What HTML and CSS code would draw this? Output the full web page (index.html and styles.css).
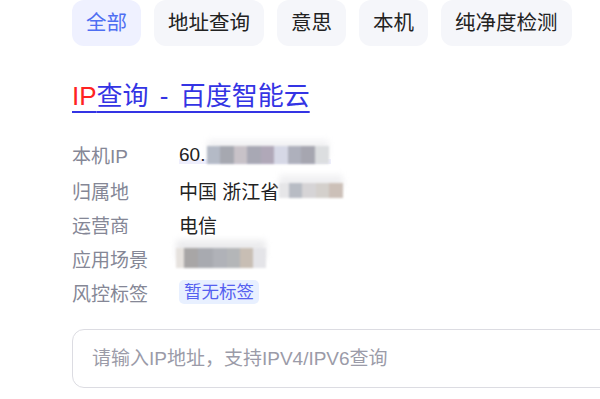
FILE: index.html
```html
<!DOCTYPE html>
<html lang="zh-CN">
<head>
  <meta charset="UTF-8">
  <title>IP查询 - 百度智能云</title>
  <meta name="viewport" content="width=device-width, initial-scale=1.0">
  <link rel="stylesheet" href="styles.css">
</head>
<body>

  <!-- 顶部分类 -->
  <div class="tabs">
    <span class="tab active">全部</span>
    <span class="tab">地址查询</span>
    <span class="tab">意思</span>
    <span class="tab">本机</span>
    <span class="tab">纯净度检测</span>
  </div>

  <!-- 标题 -->
  <h3 class="title"><a href="#"><em>IP</em>查询 - 百度智能云</a></h3>

  <!-- 结果 -->
  <div class="info">
    <div class="row first">
      <span class="label">本机IP</span>
      <span class="value ip">60.<i class="mosaic m-ip"></i></span>
    </div>
    <div class="row">
      <span class="label">归属地</span>
      <span class="value">中国 浙江省<i class="mosaic m-loc"></i></span>
    </div>
    <div class="row">
      <span class="label">运营商</span>
      <span class="value">电信</span>
    </div>
    <div class="row">
      <span class="label">应用场景</span>
      <span class="value"><i class="mosaic m-scene"></i></span>
    </div>
    <div class="row">
      <span class="label">风控标签</span>
      <span class="value"><span class="tag">暂无标签</span></span>
    </div>
  </div>

  <!-- 输入框 -->
  <div class="search">
    <input type="text" placeholder="请输入IP地址，支持IPV4/IPV6查询">
  </div>

</body>
</html>
```

FILE: styles.css
```css
* { margin: 0; padding: 0; box-sizing: border-box; }
body {
  font-family: 'Liberation Sans', 'Noto Sans CJK SC', sans-serif;
  background: #fff;
  color: #222;
  padding-left: 72px;
  overflow: hidden;
  width: 600px;
  height: 399px;
}

.tabs {
  display: flex;
  gap: 13px;
  white-space: nowrap;
}
.tab {
  height: 46px;
  line-height: 46px;
  padding: 0 14px;
  font-size: 20.5px;
  border-radius: 12px;
  background: #f5f6fa;
  color: #222;
}
.tab.active { background: #eff1ff; color: #4e6ef2; }

.title {
  margin-top: 34px;
  font-size: 26px;
  font-weight: normal;
  line-height: 32px;
  white-space: nowrap;
  word-spacing: 4px;
}
.title a {
  color: #3434e4;
  text-decoration: underline;
  text-decoration-thickness: 2px;
  text-underline-offset: 6px;
}
.title em { font-style: normal; color: #f22; }

.info { margin-top: 24px; font-size: 19px; }
.row {
  display: flex;
  align-items: center;
  height: 34px;
  white-space: nowrap;
}
.row.first { height: 37px; }
.label { width: 107px; color: #858796; }
.value { display: flex; align-items: center; color: #222; }
.value.ip {
  background: linear-gradient(to top, transparent 2px, #eeeefc 2px 7px, transparent 7px);
  padding-right: 2px;
}

.mosaic {
  display: inline-block;
  height: 18px;
  filter: blur(1.2px);
}
.m-ip {
  width: 122px;
  margin-left: 2px;
  background: linear-gradient(to right,
    #b4bac6 0 13px, #a6a8b0 13px 27px, #c8c2c8 27px 40px,
    #a8a8b4 40px 54px, #b0a8b8 54px 67px, #d6d8e6 67px 81px,
    #aeb0bc 81px 94px, #a6a6b0 94px 108px, #dcdee0 108px);
  box-shadow: 0 -6px 6px #f2f2f4;
}
.m-loc {
  width: 64px;
  height: 15px;
  background: linear-gradient(to right,
    #e6e6e8 0 10px, #b8bcc4 10px 23px, #d6d4d6 23px 37px,
    #d4d0cc 37px 50px, #ccc0b8 50px);
  box-shadow: 0 -8px 6px #f0f0f2;
}
.m-scene {
  width: 90px;
  height: 20px;
  margin-left: -3px;
  background: linear-gradient(to right,
    #e6e2de 0 8px, #a8a6a6 8px 22px, #a8aab0 22px 37px,
    #b0b2b8 37px 51px, #b4b6b8 51px 64px, #c8beb4 64px 77px, #e4e4e8 77px);
  box-shadow: 0 -8px 6px #ececee;
}

.tag {
  display: inline-block;
  height: 24px;
  line-height: 24px;
  padding: 0 5px;
  font-size: 17.5px;
  border-radius: 5px;
  background: #e8f0ff;
  color: #5560f0;
}

.search { margin-top: 20px; }
.search input {
  width: 560px;
  height: 59px;
  padding: 0 19px;
  border: 1px solid #dcdce2;
  border-radius: 12px;
  font-family: inherit;
  font-size: 19px;
  outline: none;
}
.search input::placeholder { color: #9b9ba8; }
```
